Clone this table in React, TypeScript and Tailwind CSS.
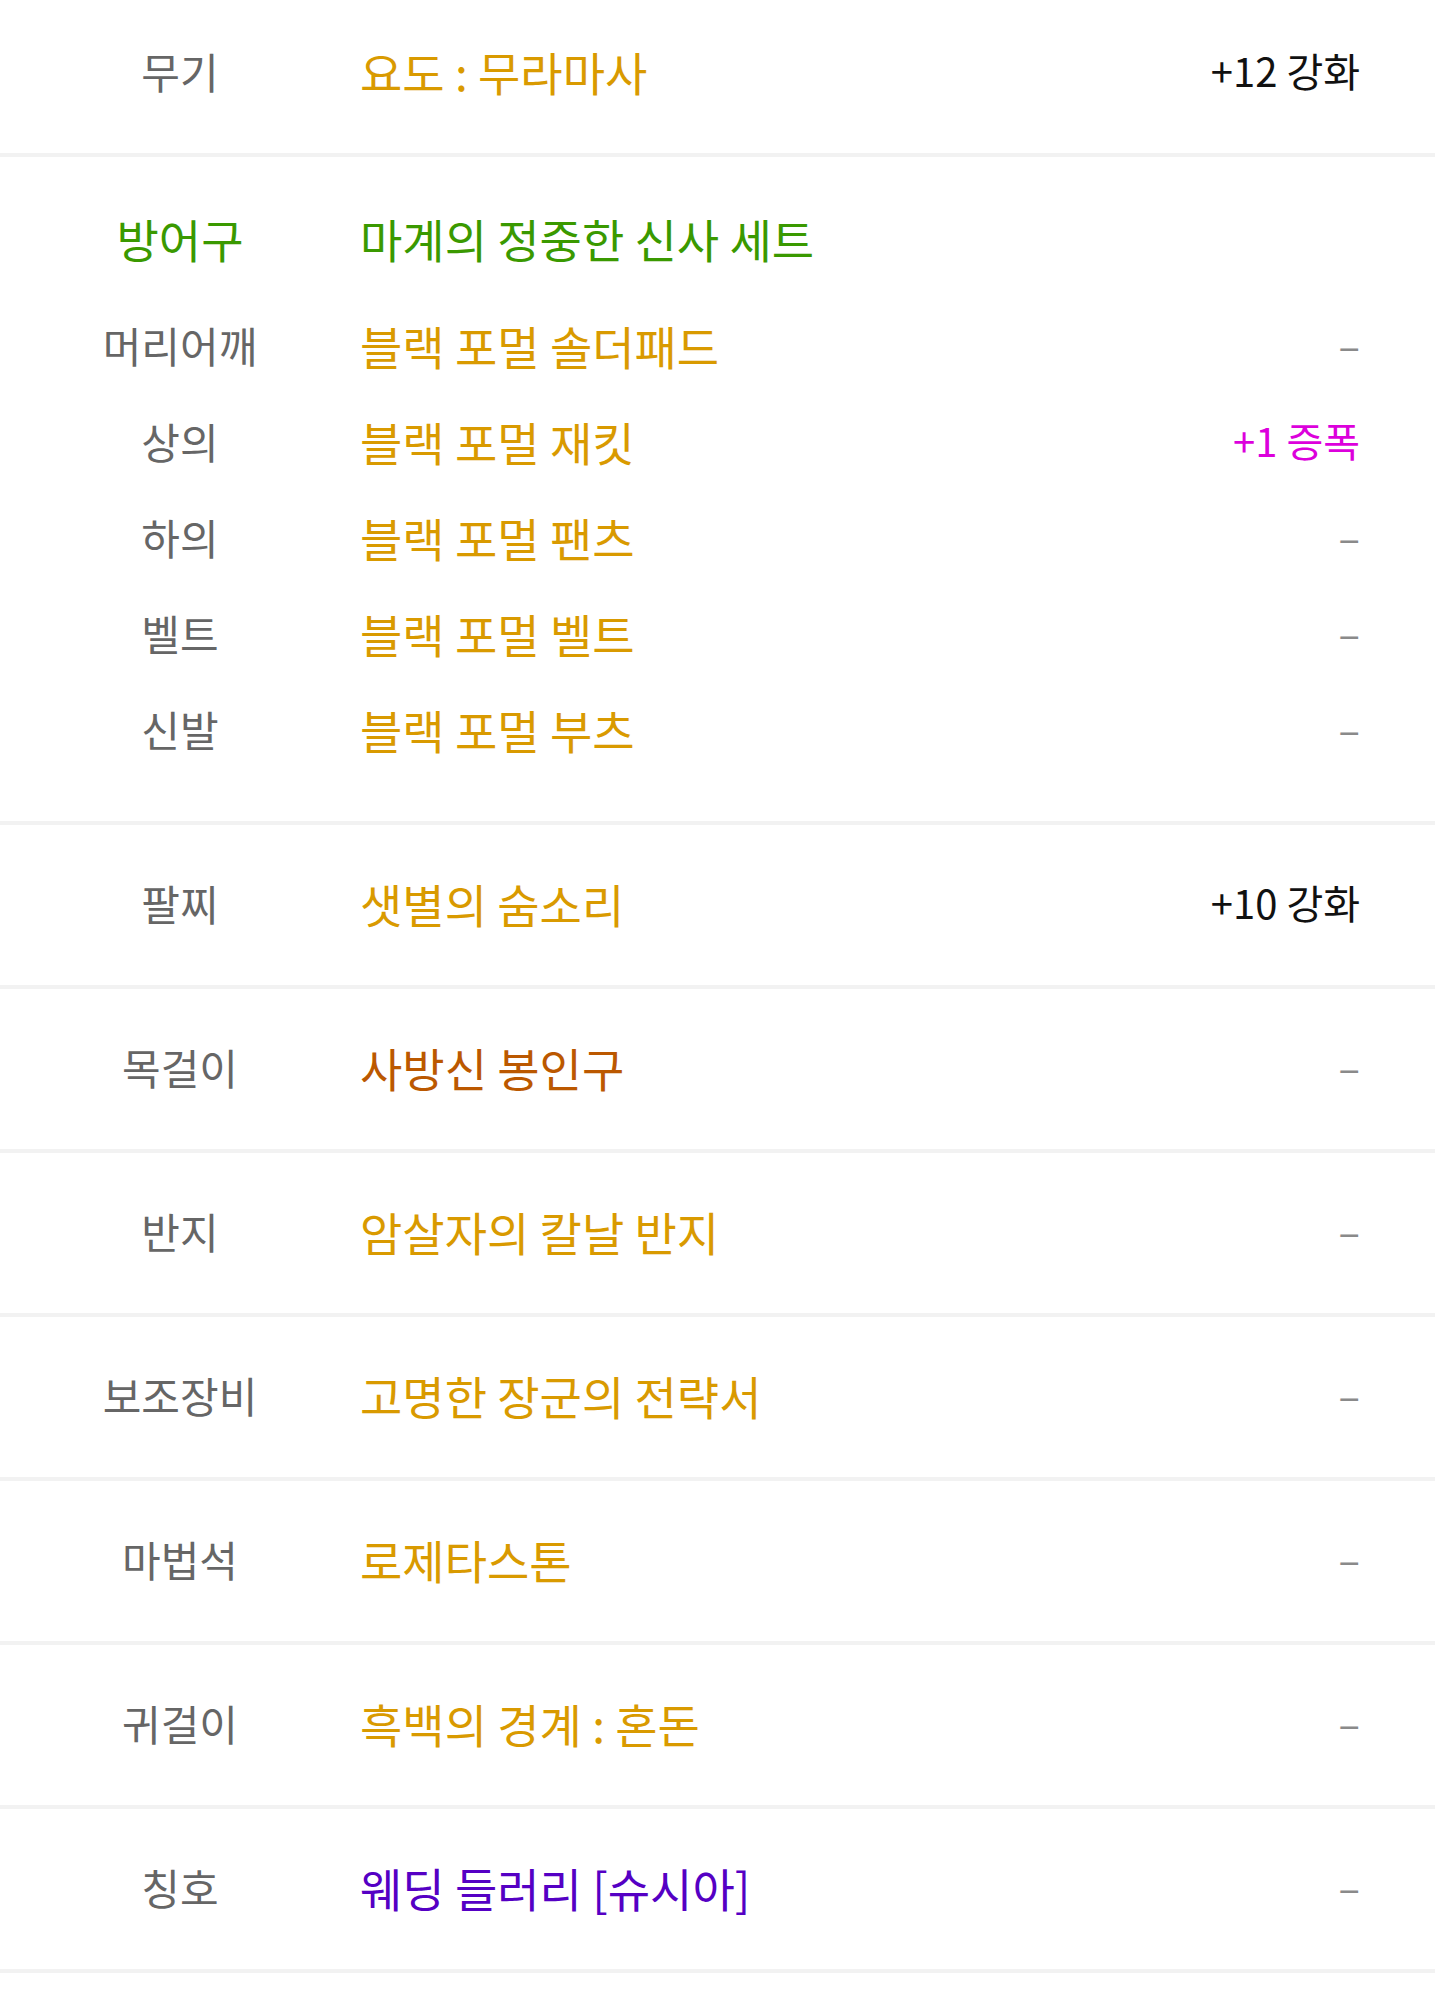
const FONT = "font-['Noto_Sans_CJK_KR','Noto_Sans',sans-serif]";

type Item = {
  slot: string;
  name: string;
  color: string;
  value?: string;
  valueColor?: string;
};

const gold = "text-[#d99a00]";

const armor: Item[] = [
  { slot: "머리어깨", name: "블랙 포멀 솔더패드", color: gold },
  { slot: "상의", name: "블랙 포멀 재킷", color: gold, value: "+1 증폭", valueColor: "text-[#dc00dc]" },
  { slot: "하의", name: "블랙 포멀 팬츠", color: gold },
  { slot: "벨트", name: "블랙 포멀 벨트", color: gold },
  { slot: "신발", name: "블랙 포멀 부츠", color: gold },
];

const rest: Item[] = [
  { slot: "팔찌", name: "샛별의 숨소리", color: gold, value: "+10 강화", valueColor: "text-[#111111]" },
  { slot: "목걸이", name: "사방신 봉인구", color: "text-[#bb5800]" },
  { slot: "반지", name: "암살자의 칼날 반지", color: gold },
  { slot: "보조장비", name: "고명한 장군의 전략서", color: gold },
  { slot: "마법석", name: "로제타스톤", color: gold },
  { slot: "귀걸이", name: "흑백의 경계 : 혼돈", color: gold },
  { slot: "칭호", name: "웨딩 들러리 [슈시아]", color: "text-[#5500c4]" },
];

function Value({ value, valueColor }: { value?: string; valueColor?: string }) {
  if (!value) {
    return <span className="text-[40px] leading-none text-[#8a8a8a]">–</span>;
  }
  return <span className={`text-[40px] leading-none ${valueColor}`}>{value}</span>;
}

function Row({ item, height }: { item: Item; height: string }) {
  return (
    <div className={`flex items-center pb-[4px] ${height}`}>
      <div className="w-[360px] shrink-0 text-center text-[42px] leading-none text-[#666666]">{item.slot}</div>
      <div className={`flex-1 text-[46px] leading-none ${item.color}`}>{item.name}</div>
      <div className="pr-[75px] text-right">
        <Value value={item.value} valueColor={item.valueColor} />
      </div>
    </div>
  );
}

export default function App() {
  return (
    <div className={`${FONT} min-h-screen overflow-hidden bg-white`}>
      <div className="-mt-[7px]">
        {/* 무기 */}
        <div className="border-b-4 border-[#f2f2f2]">
          <Row
            item={{ slot: "무기", name: "요도 : 무라마사", color: gold, value: "+12 강화", valueColor: "text-[#111111]" }}
            height="h-[160px]"
          />
        </div>

        {/* 방어구 세트 */}
        <div className="border-b-4 border-[#f2f2f2] pt-[35px] pb-[42px]">
          <div className="flex h-[96px] items-center pb-[4px]">
            <div className="w-[360px] shrink-0 text-center text-[46px] leading-none text-[#3a9900]">방어구</div>
            <div className="flex-1 text-[46px] leading-none text-[#3a9900]">마계의 정중한 신사 세트</div>
          </div>
          <div className="mt-[11px]">
            {armor.map((a) => (
              <Row key={a.slot} item={a} height="h-[96px]" />
            ))}
          </div>
        </div>

        {rest.map((r) => (
          <div key={r.slot} className="border-b-4 border-[#f2f2f2]">
            <Row item={r} height="h-[160px]" />
          </div>
        ))}
      </div>
    </div>
  );
}
